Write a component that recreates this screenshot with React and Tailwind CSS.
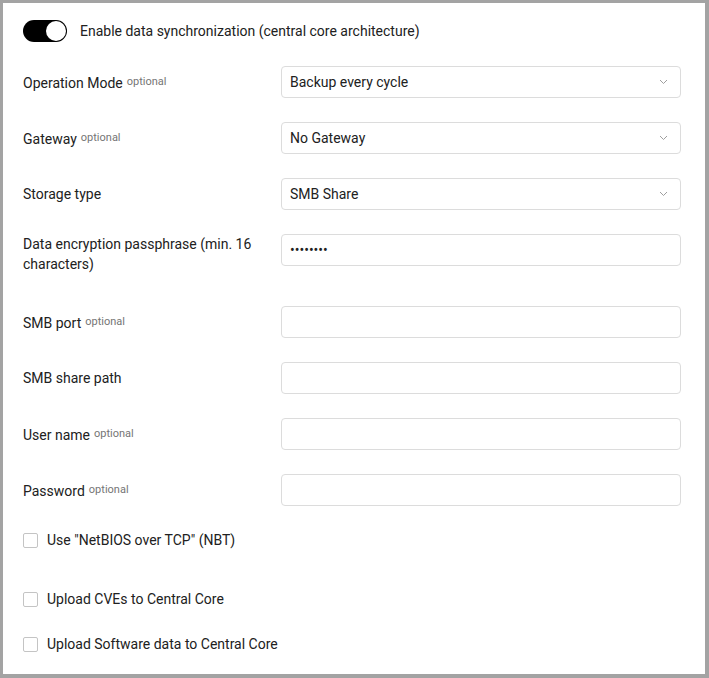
import { useState } from 'react';

const selects = [
    { label: 'Operation Mode', optional: true, value: 'Backup every cycle' },
    { label: 'Gateway', optional: true, value: 'No Gateway' },
    { label: 'Storage type', optional: false, value: 'SMB Share' },
];

const fields = [
    { label: 'SMB port', optional: true },
    { label: 'SMB share path', optional: false },
    { label: 'User name', optional: true },
    { label: 'Password', optional: true },
];

const Label = ({ text, optional }) => (
    <div className="w-[258px] shrink-0 text-[14px] leading-5 text-[#212121]">
        {text}
        {optional && <span className="ml-1 text-[11px] text-[#757575] align-[3px]">optional</span>}
    </div>
);

const Chevron = () => (
    <svg width="9" height="6" viewBox="0 0 9 6" fill="none" className="shrink-0">
        <path d="M1 1l3.5 3.5L8 1" stroke="#9e9e9e" strokeWidth="1" />
    </svg>
);

const Checkbox = ({ label, checked, onChange, className = '' }) => (
    <label className={`flex items-center h-5 cursor-pointer ${className}`}>
        <span
            onClick={onChange}
            className={`w-[15px] h-[15px] rounded-[2px] border ${checked ? 'bg-black border-black' : 'bg-white border-[#c4c4c4]'}`}
        />
        <span className="ml-[9px] text-[14px] text-[#212121]">{label}</span>
    </label>
);

export default function App() {
    const [enabled, setEnabled] = useState(true);
    const [checks, setChecks] = useState({ nbt: false, cves: false, software: false });
    const toggle = (k) => setChecks({ ...checks, [k]: !checks[k] });

    return (
        <div
            className="w-[709px] h-[678px] box-border bg-white border-[#a3a3a3] border-t-[3px] border-l-[3px] border-r-4 border-b-4 pt-[17px] pl-5 pr-6"
            style={{ fontFamily: 'Roboto, "Liberation Sans", sans-serif' }}
        >
            {/* Toggle */}
            <div className="flex items-center h-[22px]">
                <button
                    onClick={() => setEnabled(!enabled)}
                    className={`w-[44px] h-[22px] rounded-full flex items-center px-px ${enabled ? 'bg-black justify-end' : 'bg-[#bdbdbd] justify-start'}`}
                >
                    <span className="w-5 h-5 rounded-full bg-white shadow-[0_0_1px_rgba(0,0,0,0.5)]" />
                </button>
                <span className="ml-[13px] text-[14px] text-[#212121]">Enable data synchronization (central core architecture)</span>
            </div>

            <div className="flex flex-col gap-6 mt-6">
                {selects.map((s) => (
                    <div key={s.label} className="flex items-center">
                        <Label text={s.label} optional={s.optional} />
                        <div className="flex-1 h-8 flex items-center justify-between border border-[#dcdcdc] rounded pl-2 pr-3 text-[14px] text-[#212121]">
                            <span>{s.value}</span>
                            <Chevron />
                        </div>
                    </div>
                ))}

                <div className="flex items-start h-12">
                    <Label text="Data encryption passphrase (min. 16 characters)" />
                    <input
                        type="password"
                        readOnly
                        defaultValue="12345678"
                        className="flex-1 h-8 border border-[#dcdcdc] rounded px-2 text-[14px] text-[#212121] outline-none"
                    />
                </div>

                {fields.map((f) => (
                    <div key={f.label} className="flex items-center">
                        <Label text={f.label} optional={f.optional} />
                        <input
                            type="text"
                            className="flex-1 h-8 border border-[#dcdcdc] rounded px-2 text-[14px] text-[#212121] outline-none"
                        />
                    </div>
                ))}
            </div>

            <Checkbox className="mt-6" label={'Use "NetBIOS over TCP" (NBT)'} checked={checks.nbt} onChange={() => toggle('nbt')} />
            <Checkbox className="mt-[39px]" label="Upload CVEs to Central Core" checked={checks.cves} onChange={() => toggle('cves')} />
            <Checkbox className="mt-[25px]" label="Upload Software data to Central Core" checked={checks.software} onChange={() => toggle('software')} />
        </div>
    );
}
